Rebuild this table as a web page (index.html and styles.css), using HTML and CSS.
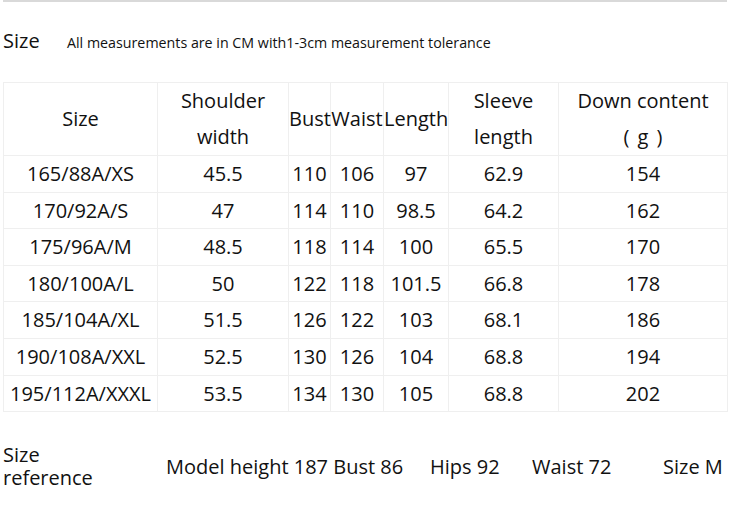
FILE: index.html
```html
<!DOCTYPE html>
<html>
<head>
<meta charset="utf-8">
<link rel="stylesheet" href="styles.css">
</head>
<body>
<div class="page">
  <div class="topline"></div>
  <div class="title">
    <span class="title-main">Size</span>
    <span class="title-sub">All measurements are in CM with1-3cm measurement tolerance</span>
  </div>
  <table class="chart">
    <colgroup>
      <col class="c1"><col class="c2"><col class="c3"><col class="c4"><col class="c5"><col class="c6"><col class="c7">
    </colgroup>
    <thead>
      <tr>
        <th>Size</th>
        <th>Shoulder<br>width</th>
        <th>Bust</th>
        <th>Waist</th>
        <th>Length</th>
        <th>Sleeve<br>length</th>
        <th>Down content<br><span class="unit">( g )</span></th>
      </tr>
    </thead>
    <tbody>
      <tr><td>165/88A/XS</td><td>45.5</td><td>110</td><td>106</td><td>97</td><td>62.9</td><td>154</td></tr>
      <tr><td>170/92A/S</td><td>47</td><td>114</td><td>110</td><td>98.5</td><td>64.2</td><td>162</td></tr>
      <tr><td>175/96A/M</td><td>48.5</td><td>118</td><td>114</td><td>100</td><td>65.5</td><td>170</td></tr>
      <tr><td>180/100A/L</td><td>50</td><td>122</td><td>118</td><td>101.5</td><td>66.8</td><td>178</td></tr>
      <tr><td>185/104A/XL</td><td>51.5</td><td>126</td><td>122</td><td>103</td><td>68.1</td><td>186</td></tr>
      <tr><td>190/108A/XXL</td><td>52.5</td><td>130</td><td>126</td><td>104</td><td>68.8</td><td>194</td></tr>
      <tr><td>195/112A/XXXL</td><td>53.5</td><td>134</td><td>130</td><td>105</td><td>68.8</td><td>202</td></tr>
    </tbody>
  </table>
  <div class="reference">
    <div class="ref-label">
      <div class="ref-line">Size</div>
      <div class="ref-line">reference</div>
    </div>
    <div class="ref-model">Model height 187 Bust 86</div>
    <div class="ref-hips">Hips 92</div>
    <div class="ref-waist">Waist 72</div>
    <div class="ref-size">Size M</div>
  </div>
</div>
</body>
</html>
```
FILE: styles.css
```css
html, body {
  margin: 0;
  padding: 0;
  background: #ffffff;
}
body {
  font-family: "Open Sans", "Noto Sans", sans-serif;
  color: #111111;
}
.page {
  width: 730px;
  height: 508px;
  overflow: hidden;
}
.topline {
  margin-left: 3px;
  width: 724px;
  height: 2px;
  background: #d9d9d9;
}
.title {
  display: flex;
  align-items: baseline;
  margin-top: 25px;
  padding-left: 3px;
  height: 24px;
}
.title-main {
  font-size: 20px;
  width: 64px;
}
.title-sub {
  font-size: 14.25px;
}
.chart {
  margin-top: 31px;
  margin-left: 3px;
  border-collapse: collapse;
  table-layout: fixed;
  width: 724px;
  font-size: 20px;
}
.c1 { width: 154px; }
.c2 { width: 131px; }
.c3 { width: 42px; }
.c4 { width: 53px; }
.c5 { width: 65px; }
.c6 { width: 110px; }
.c7 { width: 169px; }
.chart th, .chart td {
  border: 1px solid #efefef;
  padding: 0;
  text-align: center;
  font-weight: normal;
  white-space: nowrap;
  line-height: 35.6px;
  height: 35.6px;
}
.chart th {
  line-height: 36px;
  height: 72px;
}
.unit {
  word-spacing: 3px;
}
.reference {
  display: flex;
  align-items: center;
  margin-top: 31px;
  padding-left: 3px;
  font-size: 20px;
}
.ref-label {
  width: 163px;
}
.ref-line {
  line-height: 23px;
}
.ref-model { width: 264px; }
.ref-hips { width: 102px; }
.ref-waist { width: 131px; }
```
